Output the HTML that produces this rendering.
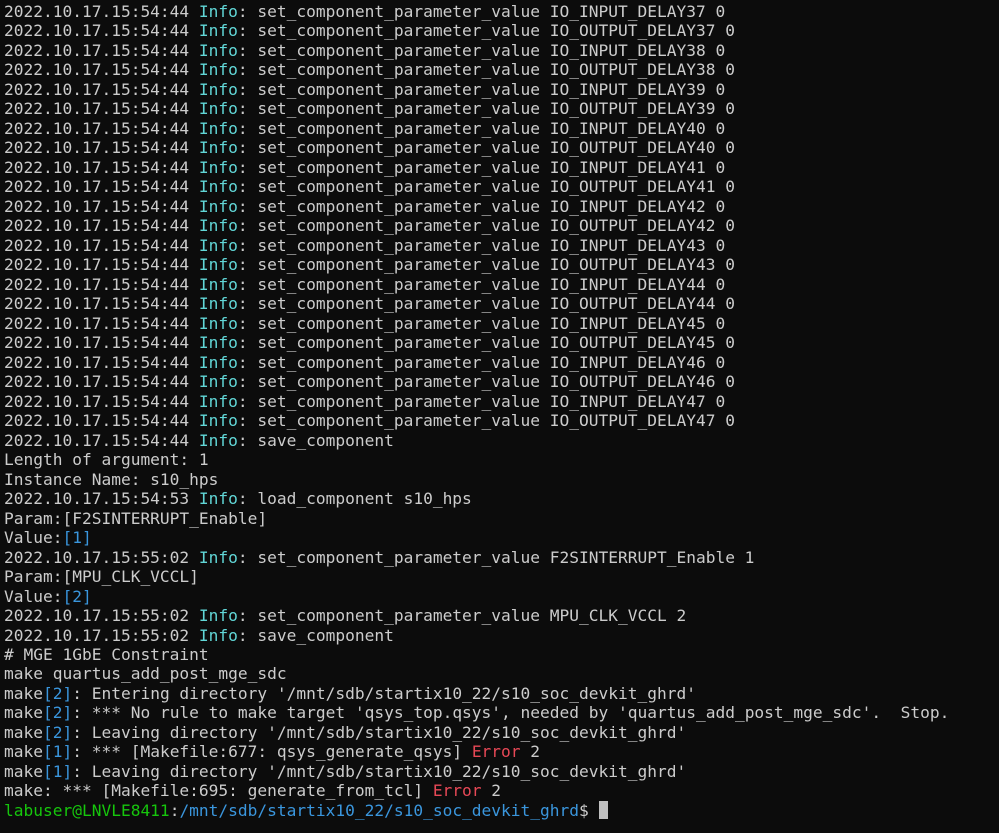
<!DOCTYPE html>
<html><head><meta charset="utf-8"><style>
html,body{margin:0;padding:0;background:#0c0c0c;width:999px;height:833px;overflow:hidden}
pre{margin:0;padding:2px 0 0 4px;font-family:"DejaVu Sans Mono","Liberation Mono",monospace;font-size:16.2px;line-height:19.49px;color:#cccccc;white-space:pre}
.i{color:#61d6d6}.b{color:#3a96dd}.r{color:#e74856}.g{color:#16c60c}.p{color:#3a96dd}
.c{display:inline-block;width:9px;height:18px;background:#c0c0c0;vertical-align:-3px}
</style></head><body><pre>2022.10.17.15:54:44 <span class="i">Info</span>: set_component_parameter_value IO_INPUT_DELAY37 0
2022.10.17.15:54:44 <span class="i">Info</span>: set_component_parameter_value IO_OUTPUT_DELAY37 0
2022.10.17.15:54:44 <span class="i">Info</span>: set_component_parameter_value IO_INPUT_DELAY38 0
2022.10.17.15:54:44 <span class="i">Info</span>: set_component_parameter_value IO_OUTPUT_DELAY38 0
2022.10.17.15:54:44 <span class="i">Info</span>: set_component_parameter_value IO_INPUT_DELAY39 0
2022.10.17.15:54:44 <span class="i">Info</span>: set_component_parameter_value IO_OUTPUT_DELAY39 0
2022.10.17.15:54:44 <span class="i">Info</span>: set_component_parameter_value IO_INPUT_DELAY40 0
2022.10.17.15:54:44 <span class="i">Info</span>: set_component_parameter_value IO_OUTPUT_DELAY40 0
2022.10.17.15:54:44 <span class="i">Info</span>: set_component_parameter_value IO_INPUT_DELAY41 0
2022.10.17.15:54:44 <span class="i">Info</span>: set_component_parameter_value IO_OUTPUT_DELAY41 0
2022.10.17.15:54:44 <span class="i">Info</span>: set_component_parameter_value IO_INPUT_DELAY42 0
2022.10.17.15:54:44 <span class="i">Info</span>: set_component_parameter_value IO_OUTPUT_DELAY42 0
2022.10.17.15:54:44 <span class="i">Info</span>: set_component_parameter_value IO_INPUT_DELAY43 0
2022.10.17.15:54:44 <span class="i">Info</span>: set_component_parameter_value IO_OUTPUT_DELAY43 0
2022.10.17.15:54:44 <span class="i">Info</span>: set_component_parameter_value IO_INPUT_DELAY44 0
2022.10.17.15:54:44 <span class="i">Info</span>: set_component_parameter_value IO_OUTPUT_DELAY44 0
2022.10.17.15:54:44 <span class="i">Info</span>: set_component_parameter_value IO_INPUT_DELAY45 0
2022.10.17.15:54:44 <span class="i">Info</span>: set_component_parameter_value IO_OUTPUT_DELAY45 0
2022.10.17.15:54:44 <span class="i">Info</span>: set_component_parameter_value IO_INPUT_DELAY46 0
2022.10.17.15:54:44 <span class="i">Info</span>: set_component_parameter_value IO_OUTPUT_DELAY46 0
2022.10.17.15:54:44 <span class="i">Info</span>: set_component_parameter_value IO_INPUT_DELAY47 0
2022.10.17.15:54:44 <span class="i">Info</span>: set_component_parameter_value IO_OUTPUT_DELAY47 0
2022.10.17.15:54:44 <span class="i">Info</span>: save_component
Length of argument: 1
Instance Name: s10_hps
2022.10.17.15:54:53 <span class="i">Info</span>: load_component s10_hps
Param:[F2SINTERRUPT_Enable]
Value:<span class="b">[1]</span>
2022.10.17.15:55:02 <span class="i">Info</span>: set_component_parameter_value F2SINTERRUPT_Enable 1
Param:[MPU_CLK_VCCL]
Value:<span class="b">[2]</span>
2022.10.17.15:55:02 <span class="i">Info</span>: set_component_parameter_value MPU_CLK_VCCL 2
2022.10.17.15:55:02 <span class="i">Info</span>: save_component
# MGE 1GbE Constraint
make quartus_add_post_mge_sdc
make<span class="b">[2]</span>: Entering directory '/mnt/sdb/startix10_22/s10_soc_devkit_ghrd'
make<span class="b">[2]</span>: *** No rule to make target 'qsys_top.qsys', needed by 'quartus_add_post_mge_sdc'.  Stop.
make<span class="b">[2]</span>: Leaving directory '/mnt/sdb/startix10_22/s10_soc_devkit_ghrd'
make<span class="b">[1]</span>: *** [Makefile:677: qsys_generate_qsys] <span class="r">Error</span> 2
make<span class="b">[1]</span>: Leaving directory '/mnt/sdb/startix10_22/s10_soc_devkit_ghrd'
make: *** [Makefile:695: generate_from_tcl] <span class="r">Error</span> 2
<span class="g">labuser@LNVLE8411</span>:<span class="p">/mnt/sdb/startix10_22/s10_soc_devkit_ghrd</span>$ <span class="c"></span></pre></body></html>
